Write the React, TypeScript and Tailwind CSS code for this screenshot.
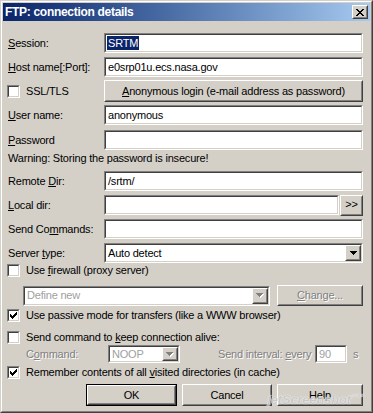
import React from "react";

const FONT = { fontFamily: '"Liberation Sans", Arial, sans-serif' };

function Sunken({ className = "", inner = "", children }: { className?: string; inner?: string; children?: React.ReactNode }) {
  return (
    <div className={`border border-t-[#808080] border-l-[#808080] border-b-white border-r-white ${className}`}>
      <div className={`h-full w-full border border-t-[#404040] border-l-[#404040] border-b-[#D4D0C8] border-r-[#D4D0C8] ${inner}`}>
        {children}
      </div>
    </div>
  );
}

function Raised({ className = "", children }: { className?: string; children?: React.ReactNode }) {
  return (
    <div className={`border border-t-white border-l-white border-b-[#404040] border-r-[#404040] bg-[#D4D0C8] ${className}`}>
      <div className="flex h-full w-full items-center justify-center border border-t-[#D4D0C8] border-l-[#D4D0C8] border-b-[#808080] border-r-[#808080]">
        {children}
      </div>
    </div>
  );
}

const CHECK = [
  [6],
  [5, 6],
  [0, 4, 5, 6],
  [0, 1, 3, 4, 5],
  [0, 1, 2, 3, 4],
  [1, 2, 3],
  [2],
];

function Checkbox({ checked }: { checked?: boolean }) {
  return (
    <Sunken className="h-[13px] w-[13px] shrink-0" inner="bg-white flex items-center justify-center">
      {checked && (
        <svg width="7" height="7" viewBox="0 0 7 7" shapeRendering="crispEdges">
          {CHECK.map((cols, r) =>
            cols.map((c) => <rect key={`${r}-${c}`} x={c} y={r} width="1" height="1" fill="#000" />)
          )}
        </svg>
      )}
    </Sunken>
  );
}

function Arrow({ color = "#000" }: { color?: string }) {
  return (
    <svg width="7" height="4" viewBox="0 0 7 4" shapeRendering="crispEdges">
      <rect x="0" y="0" width="7" height="1" fill={color} />
      <rect x="1" y="1" width="5" height="1" fill={color} />
      <rect x="2" y="2" width="3" height="1" fill={color} />
      <rect x="3" y="3" width="1" height="1" fill={color} />
    </svg>
  );
}

function DisabledArrow() {
  return (
    <svg width="8" height="5" viewBox="0 0 8 5" shapeRendering="crispEdges">
      <rect x="1" y="1" width="7" height="1" fill="#fff" />
      <rect x="2" y="2" width="5" height="1" fill="#fff" />
      <rect x="3" y="3" width="3" height="1" fill="#fff" />
      <rect x="4" y="4" width="1" height="1" fill="#fff" />
      <rect x="0" y="0" width="7" height="1" fill="#808080" />
      <rect x="1" y="1" width="5" height="1" fill="#808080" />
      <rect x="2" y="2" width="3" height="1" fill="#808080" />
      <rect x="3" y="3" width="1" height="1" fill="#808080" />
    </svg>
  );
}

const CLOSE = [
  [0, 1, 6, 7],
  [1, 2, 5, 6],
  [2, 3, 4, 5],
  [3, 4],
  [2, 3, 4, 5],
  [1, 2, 5, 6],
  [0, 1, 6, 7],
];

function U({ children }: { children: React.ReactNode }) {
  return <span className="underline underline-offset-[1px]">{children}</span>;
}

const dis = "text-[#808080] [text-shadow:1px_1px_0_#ffffff]";

function Label({ children }: { children: React.ReactNode }) {
  return <div className="w-[97px] shrink-0 pl-[1px]">{children}</div>;
}

function TextField({ value, className = "w-[259px]" }: { value?: React.ReactNode; className?: string }) {
  return (
    <Sunken className={`h-[20px] ${className}`} inner="bg-white flex items-center pl-[1px] overflow-hidden">
      {value}
    </Sunken>
  );
}

export default function App() {
  return (
    <div
      style={FONT}
      className="relative h-[413px] w-[373px] overflow-hidden border border-t-[#D4D0C8] border-l-[#D4D0C8] border-b-[#404040] border-r-[#404040] bg-[#D4D0C8] text-[11px] tracking-[-0.2px] text-black"
    >
      <div className="h-full w-full border border-t-white border-l-white border-b-[#808080] border-r-[#808080] p-[1px]">
        {/* Title bar */}
        <div className="flex h-[18px] items-center justify-between bg-gradient-to-r from-[#0A246A] to-[#A6CAF0] pl-[2px] pr-[2px]">
          <span className="text-[12px] font-bold tracking-[-0.3px] text-white">FTP: connection details</span>
          <Raised className="h-[14px] w-[16px]">
            <svg width="8" height="7" viewBox="0 0 8 7" shapeRendering="crispEdges">
              {CLOSE.map((cols, r) =>
                cols.map((c) => <rect key={`${r}-${c}`} x={c} y={r} width="1" height="1" fill="#000" />)
              )}
            </svg>
          </Raised>
        </div>

        {/* Body */}
        <div className="flex flex-col pl-[4px] pr-[5px]">
          <div className="mt-[12px] flex h-[20px] items-center">
            <Label><U>S</U>ession:</Label>
            <TextField value={<span className="bg-[#0A246A] px-[1px] leading-[14px] text-white">SRTM</span>} />
          </div>

          <div className="mt-[4px] flex h-[20px] items-center">
            <Label><U>H</U>ost name[:Port]:</Label>
            <TextField value={<span className="pl-[1px]">e0srp01u.ecs.nasa.gov</span>} />
          </div>

          <div className="mt-[3px] flex h-[22px] items-center">
            <div className="flex w-[97px] shrink-0 items-center">
              <Checkbox />
              <span className="ml-[6px]">SSL/TLS</span>
            </div>
            <Raised className="h-[22px] w-[259px]">
              <span><U>A</U>nonymous login (e-mail address as password)</span>
            </Raised>
          </div>

          <div className="mt-[3px] flex h-[20px] items-center">
            <Label><U>U</U>ser name:</Label>
            <TextField value={<span className="pl-[1px]">anonymous</span>} />
          </div>

          <div className="mt-[5px] flex h-[20px] items-center">
            <Label><U>P</U>assword</Label>
            <TextField />
          </div>

          <div className="mt-[1px] flex h-[15px] items-center pl-[1px]">
            Warning: Storing the password is insecure!
          </div>

          <div className="mt-[5px] flex h-[20px] items-center">
            <Label>Remote <U>D</U>ir:</Label>
            <TextField value={<span className="pl-[1px]">/srtm/</span>} />
          </div>

          <div className="mt-[4px] flex h-[20px] items-center">
            <Label><U>L</U>ocal dir:</Label>
            <TextField className="w-[235px]" />
            <Raised className="ml-[1px] h-[21px] w-[23px]">
              <span className="pb-[1px]">&gt;&gt;</span>
            </Raised>
          </div>

          <div className="mt-[4px] flex h-[20px] items-center">
            <Label>Send Co<U>m</U>mands:</Label>
            <TextField />
          </div>

          <div className="mt-[4px] flex h-[20px] items-center">
            <Label>Server <U>t</U>ype:</Label>
            <Sunken className="h-[20px] w-[259px]" inner="bg-white flex items-center justify-between pl-[2px] pr-[0px]">
              <span>Auto detect</span>
              <Raised className="h-[16px] w-[16px]">
                <Arrow />
              </Raised>
            </Sunken>
          </div>

          <div className="mt-[1px] flex h-[13px] items-center">
            <Checkbox />
            <span className="ml-[6px]">Use <U>f</U>irewall (proxy server)</span>
          </div>

          <div className="mt-[8px] flex h-[21px] items-center">
            <Sunken className="ml-[16px] h-[20px] w-[247px]" inner="bg-white flex items-center justify-between pl-[2px]">
              <span className="text-[#A0A0A0]">Define new</span>
              <Raised className="h-[16px] w-[16px]">
                <DisabledArrow />
              </Raised>
            </Sunken>
            <Raised className="ml-[7px] h-[21px] w-[86px]">
              <span className={dis}><U>C</U>hange...</span>
            </Raised>
          </div>

          <div className="mt-[3px] flex h-[13px] items-center">
            <Checkbox checked />
            <span className="ml-[6px]">Use passive mode for transfers (like a WWW browser)</span>
          </div>

          <div className="mt-[9px] flex h-[13px] items-center">
            <Checkbox />
            <span className="ml-[6px]">Send command to <U>k</U>eep connection alive:</span>
          </div>

          <div className="mt-[1px] flex h-[18px] items-center">
            <div className={`w-[101px] shrink-0 pl-[19px] ${dis}`}>C<U>o</U>mmand:</div>
            <Sunken className="h-[18px] w-[72px]" inner="bg-white flex items-center justify-between pl-[2px]">
              <span className="text-[#A0A0A0]">NOOP</span>
              <Raised className="h-[14px] w-[16px]">
                <DisabledArrow />
              </Raised>
            </Sunken>
            <div className={`w-[135px] shrink-0 pl-[38px] ${dis}`}>Send interval: <U>e</U>very</div>
            <Sunken className="h-[18px] w-[32px]" inner="bg-white flex items-center pl-[2px]">
              <span className="text-[#A0A0A0]">90</span>
            </Sunken>
            <span className={`ml-[6px] ${dis}`}>s</span>
          </div>

          <div className="mt-[3px] flex h-[13px] items-center">
            <Checkbox checked />
            <span className="ml-[6px]">Remember contents of all <U>v</U>isited directories (in cache)</span>
          </div>

          <div className="mt-[5px] flex h-[22px] items-center">
            <div className="ml-[79px] h-[22px] w-[91px] border border-black">
              <Raised className="h-full w-full">
                <span>OK</span>
              </Raised>
            </div>
            <Raised className="ml-[5px] h-[22px] w-[90px]">
              <span>Cancel</span>
            </Raised>
            <Raised className="ml-[5px] h-[22px] w-[86px]">
              <span>Help</span>
            </Raised>
          </div>
        </div>
      </div>

      {/* watermark overlay */}
      <div className="pointer-events-none absolute bottom-[3px] right-[8px] flex items-end text-[13px] font-bold italic text-[#C8C8C8] opacity-80 [text-shadow:0_0_1px_#ffffff,0_0_1px_#ffffff]">
        <span>jetScreenshot</span>
        <span className="mb-[9px] text-[6px]">.com</span>
      </div>
    </div>
  );
}
